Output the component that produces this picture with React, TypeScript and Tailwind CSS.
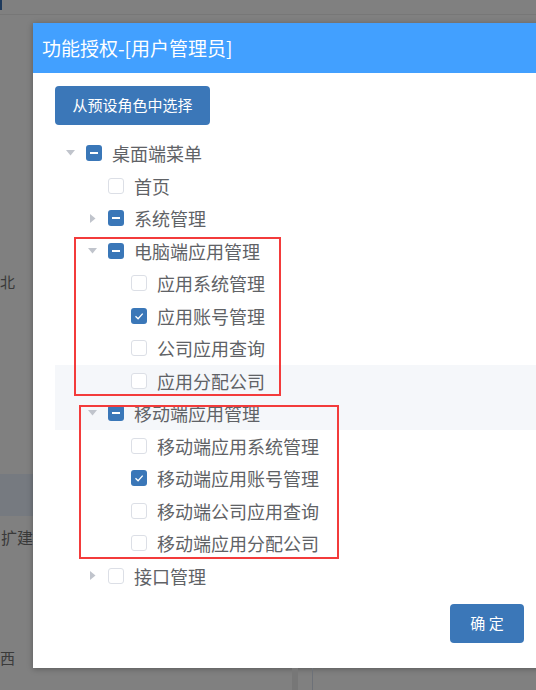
type CheckState = "none" | "checked" | "partial";

type TreeRow = {
  label: string;
  level: 0 | 1 | 2;
  caret?: "down" | "right";
  state: CheckState;
  active?: boolean;
};

const rows: TreeRow[] = [
  { label: "桌面端菜单", level: 0, caret: "down", state: "partial" },
  { label: "首页", level: 1, state: "none" },
  { label: "系统管理", level: 1, caret: "right", state: "partial" },
  { label: "电脑端应用管理", level: 1, caret: "down", state: "partial" },
  { label: "应用系统管理", level: 2, state: "none" },
  { label: "应用账号管理", level: 2, state: "checked" },
  { label: "公司应用查询", level: 2, state: "none" },
  { label: "应用分配公司", level: 2, state: "none", active: true },
  { label: "移动端应用管理", level: 1, caret: "down", state: "partial", active: true },
  { label: "移动端应用系统管理", level: 2, state: "none" },
  { label: "移动端应用账号管理", level: 2, state: "checked" },
  { label: "移动端公司应用查询", level: 2, state: "none" },
  { label: "移动端应用分配公司", level: 2, state: "none" },
  { label: "接口管理", level: 1, caret: "right", state: "none" },
];

const levelPad = ["pl-0", "pl-[22px]", "pl-[45px]"];

function Caret({ dir }: { dir?: "down" | "right" }) {
  return (
    <span className="flex w-[31px] shrink-0 items-center justify-center">
      {dir === "down" && (
        <svg width="9" height="6" viewBox="0 0 9 6">
          <path d="M0 0h9L4.5 5.5z" fill="#c0c4cc" />
        </svg>
      )}
      {dir === "right" && (
        <svg width="6" height="9" viewBox="0 0 6 9">
          <path d="M0 0v9l5.5-4.5z" fill="#c0c4cc" />
        </svg>
      )}
    </span>
  );
}

function Checkbox({ state }: { state: CheckState }) {
  if (state === "none") {
    return <span className="h-4 w-4 shrink-0 rounded-[3px] border border-[#dcdfe6] bg-white" />;
  }
  return (
    <span className="flex h-4 w-4 shrink-0 items-center justify-center rounded-[3px] bg-[#3a77b8]">
      {state === "partial" ? (
        <span className="h-[2px] w-[8px] bg-white" />
      ) : (
        <svg width="16" height="16" viewBox="0 0 16 16">
          <path d="M4.5 8.2l2.6 2.6 4.6-5.2" fill="none" stroke="#fff" strokeWidth="1.3" />
        </svg>
      )}
    </span>
  );
}

export default function App() {
  return (
    <div
      className="relative flex h-[690px] w-[536px] flex-col overflow-hidden bg-[#808080]"
      style={{ fontFamily: '"Noto Sans CJK SC", "Noto Sans", sans-serif' }}
    >
      <div className="flex h-[15px] shrink-0 border-b border-[#777777]">
        <div className="h-[10px] w-[2px] bg-[#1e3a5c]" />
      </div>

      <div className="flex flex-1">
        <div className="flex w-[33px] shrink-0 flex-col overflow-hidden text-[15px] leading-[20px] text-[#3a3a3a]">
          <div className="mt-[257px] whitespace-nowrap">北</div>
          <div className="mt-[182px] h-[42px] bg-[#767a80]" />
          <div className="mt-[11px] flex justify-end whitespace-nowrap text-[16px]">扩建</div>
          <div className="mt-[101px] whitespace-nowrap">西</div>
        </div>

        <div className="flex flex-1 flex-col">
          <div className="mt-[8px] flex w-[520px] shrink-0 flex-col bg-white shadow-[0_1px_6px_rgba(0,0,0,0.3)]">
            <div className="flex h-[50px] items-center bg-[#42a0ff] pl-[9px] text-[19px] text-white">
              功能授权-[用户管理员]
            </div>

            <div className="flex flex-col pl-[22px] pt-[13px]">
              <button className="flex h-[39px] w-[155px] items-center justify-center rounded-[4px] bg-[#3b77b8] text-[15px] text-white">
                从预设角色中选择
              </button>

              <div className="mt-[12px] flex flex-col">
                {rows.map((row) => (
                  <div
                    key={row.label}
                    className={`flex h-[32.5px] items-center ${levelPad[row.level]} ${
                      row.active ? "bg-[#f5f7fa]" : ""
                    }`}
                  >
                    <Caret dir={row.caret} />
                    <Checkbox state={row.state} />
                    <span className="ml-[10px] text-[18px] leading-[24px] text-[#606266]">{row.label}</span>
                  </div>
                ))}
              </div>
            </div>

            <div className="flex justify-end pb-[25px] pr-[29px] pt-[12px]">
              <button className="flex h-[39px] w-[74px] items-center justify-center rounded-[4px] bg-[#3b77b8] text-[15px] text-white">
                确 定
              </button>
            </div>
          </div>

          <div className="flex h-[22px]">
            <div className="ml-[259px] w-[6px] bg-[#777777]" />
            <div className="ml-[14px] w-px bg-[#6d7178]" />
          </div>
        </div>
      </div>

      <div className="absolute left-[74px] top-[237px] h-[159px] w-[207px] border-2 border-[#f33b3b]" />
      <div className="absolute left-[79px] top-[405px] h-[154px] w-[260px] border-2 border-[#f33b3b]" />
    </div>
  );
}
